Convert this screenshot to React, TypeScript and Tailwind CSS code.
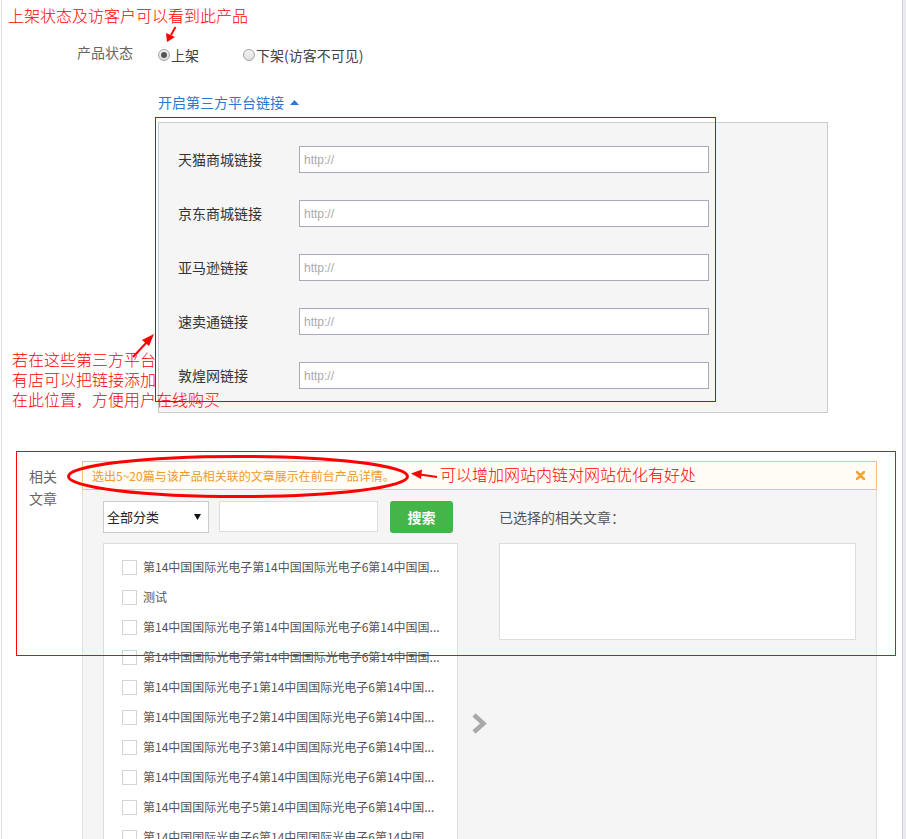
import React from "react";

const platforms = ["天猫商城链接", "京东商城链接", "亚马逊链接", "速卖通链接", "敦煌网链接"];

const articles = [
  "第14中国国际光电子第14中国国际光电子6第14中国国...",
  "测试",
  "第14中国国际光电子第14中国国际光电子6第14中国国...",
  "第14中国国际光电子第14中国国际光电子6第14中国国...",
  "第14中国国际光电子1第14中国国际光电子6第14中国...",
  "第14中国国际光电子2第14中国国际光电子6第14中国...",
  "第14中国国际光电子3第14中国国际光电子6第14中国...",
  "第14中国国际光电子4第14中国国际光电子6第14中国...",
  "第14中国国际光电子5第14中国国际光电子6第14中国...",
  "第14中国国际光电子6第14中国国际光电子6第14中国...",
  "第14中国国际光电子7第14中国国际光电子6第14中国...",
];

const Radio: React.FC<{ checked?: boolean }> = ({ checked }) => (
  <span className="flex size-[12px] shrink-0 items-center justify-center rounded-full border border-[#a3a3a3] bg-gradient-to-b from-[#f4f4f4] to-[#dedede]">
    {checked ? <span className="size-[6px] rounded-full bg-[#555]" /> : null}
  </span>
);

const Annotations: React.FC = () => (
  <>
    <div className="pointer-events-none absolute left-[8px] top-[5px] whitespace-nowrap text-[16px] font-light leading-[20px] text-[#f00]">
      上架状态及访客户可以看到此产品
    </div>

    <div className="pointer-events-none absolute left-[155px] top-[117px] h-[285px] w-[561px] border border-[#d40000]" />

    <div className="pointer-events-none absolute left-[12px] top-[349px] whitespace-nowrap text-[16px] font-light leading-[20px] text-[#f00]">
      若在这些第三方平台
      <br />
      有店可以把链接添加
      <br />
      在此位置，方便用户在线购买
    </div>

    <div className="pointer-events-none absolute left-[16px] top-[451px] h-[205px] w-[880px] border border-[#f00]" />

    <div className="pointer-events-none absolute left-[440px] top-[464px] whitespace-nowrap text-[16px] font-light leading-[20px] text-[#f00]">
      可以增加网站内链对网站优化有好处
    </div>

    <svg
      className="pointer-events-none absolute left-0 top-0"
      width="906"
      height="839"
      viewBox="0 0 906 839"
    >
      {/* arrow to the radio */}
      <line x1="175.5" y1="27" x2="171" y2="35" stroke="#f00" strokeWidth="2" />
      <polygon points="167,42 166,33 175,37" fill="#f00" />

      {/* arrow to the links panel */}
      <line x1="133" y1="357" x2="147" y2="342" stroke="#f00" strokeWidth="2" />
      <polygon points="154,334 142,340 149,346" fill="#f00" />

      {/* ellipse round the notice */}
      <ellipse cx="238" cy="476.5" rx="169.5" ry="20" fill="none" stroke="#f00" strokeWidth="3" />

      {/* arrow to the ellipse */}
      <line x1="437" y1="477" x2="420" y2="474.5" stroke="#f00" strokeWidth="2" />
      <polygon points="411,473.5 422,469.5 421,479" fill="#f00" />
    </svg>
  </>
);

export default function App() {
  return (
    <div className="relative h-[839px] w-[906px] overflow-hidden bg-white font-['Noto_Sans_CJK_SC',sans-serif]">
      <div className="flex h-full">
        <div className="w-px shrink-0" />
        <div className="w-[901px] shrink-0 border-l border-[#dddddd]">
          {/* product status */}
          <div className="mt-[45px] flex h-[20px] items-center">
            <span className="relative -top-[3px] w-[156px] pl-[75px] text-[14px] leading-[20px] text-[#666]">
              产品状态
            </span>
            <label className="flex w-[85px] items-center gap-px text-[14px] leading-[20px] text-[#444]">
              <Radio checked />
              上架
            </label>
            <label className="flex items-center gap-px text-[14px] leading-[20px] text-[#444]">
              <Radio />
              下架(访客不可见)
            </label>
          </div>

          {/* third party toggle */}
          <div className="mt-[27px] flex h-[20px] items-center pl-[156px] text-[14px] leading-[20px] text-[#2b79d3]">
            开启第三方平台链接
            <svg className="ml-[6px]" width="9" height="5" viewBox="0 0 9 5">
              <polygon points="0,5 4.5,0 9,5" fill="#2b79d3" />
            </svg>
          </div>

          <div className="ml-[156px] mt-[10px] flex w-[670px] flex-col gap-[27px] border border-[#cccccc] bg-[#f5f5f5] px-[19px] py-[23px]">
            {platforms.map((name) => (
              <div key={name} className="flex h-[27px] items-center">
                <span className="w-[121px] text-[14px] text-[#333]">{name}</span>
                <input
                  className="h-[27px] w-[410px] border border-[#a9a9bd] bg-white pl-[4px] font-['Liberation_Sans',sans-serif] text-[12px] text-[#333] outline-none placeholder:text-[#aaaaaa]"
                  placeholder="http://"
                />
              </div>
            ))}
          </div>

          {/* related articles */}
          <div className="mt-[48px] flex">
            <div className="w-[80px] shrink-0 pl-[27px] pt-[4px] text-[14px] leading-[22px] text-[#666]">
              相关
              <br />
              文章
            </div>
            <div className="w-[795px] shrink-0">
              <div className="flex h-[29px] items-center justify-between border border-[#f0c47c] bg-[#fffdf6] pl-[9px] pr-[11px]">
                <span className="text-[12px] text-[#f29b2a]">
                  选出5~20篇与该产品相关联的文章展示在前台产品详情。
                </span>
                <svg width="9" height="9" viewBox="0 0 9 9">
                  <path d="M1 1 8 8M8 1 1 8" stroke="#f5a43a" strokeWidth="2.6" strokeLinecap="round" />
                </svg>
              </div>

              <div className="h-[400px] border-x border-[#e0e0e0] bg-[#f5f5f5] pl-[20px] pt-[11px]">
                <div className="grid grid-cols-[355px_41px_357px] grid-rows-[32px_auto] gap-y-[10px]">
                  <div className="flex items-start">
                    <div className="flex h-[32px] w-[106px] items-center justify-between border border-[#cccccc] bg-white pl-[3px] pr-[7px] text-[13px] text-[#222]">
                      全部分类
                      <svg width="7" height="6" viewBox="0 0 7 6">
                        <polygon points="0,0 7,0 3.5,6" fill="#111" />
                      </svg>
                    </div>
                    <input className="ml-[10px] h-[31px] w-[159px] border border-[#dddddd] bg-white outline-none" />
                    <button className="ml-[12px] h-[32px] w-[63px] rounded-[3px] bg-[#44b549] text-[14px] font-bold text-white">
                      搜索
                    </button>
                  </div>
                  <div />
                  <div className="flex items-center text-[14px] text-[#555]">已选择的相关文章：</div>

                  <div className="h-[360px] overflow-hidden border border-[#dddddd] bg-white pt-[8px]">
                    {articles.map((title, i) => (
                      <div key={i} className="flex h-[30px] items-center pl-[18px]">
                        <span className="size-[15px] shrink-0 border border-[#d4d4d4] bg-white" />
                        <span className="ml-[6px] whitespace-nowrap text-[12px] text-[#555]">{title}</span>
                      </div>
                    ))}
                  </div>
                  <div className="flex h-[360px] items-center justify-center pl-px">
                    <svg width="16" height="23" viewBox="0 0 16 23">
                      <polyline
                        points="3,3 12.5,11.5 3,20"
                        fill="none"
                        stroke="#a9a9a9"
                        strokeWidth="4.5"
                        strokeLinejoin="miter"
                      />
                    </svg>
                  </div>
                  <div className="h-[97px] border border-[#dddddd] bg-white" />
                </div>
              </div>
            </div>
          </div>
        </div>
        <div className="w-[4px] shrink-0 border-l border-[#d2d2d8] bg-[#e9e9ef]" />
      </div>
      <Annotations />
    </div>
  );
}
